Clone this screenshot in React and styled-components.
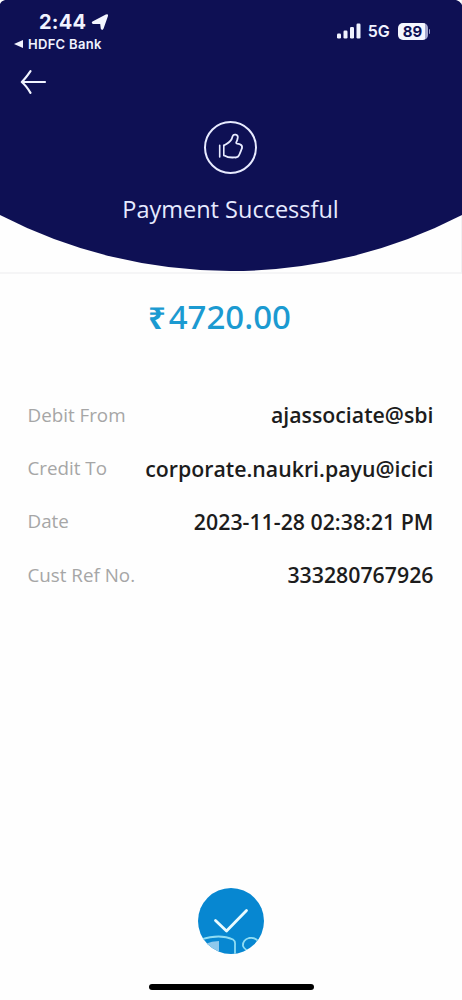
import React from "react";
import styled, { createGlobalStyle } from "styled-components";

const Global = createGlobalStyle`
  * { box-sizing: border-box; }
  html { background: #000; }
  body { margin: 0; font-family: "Open Sans", "Noto Sans", sans-serif; }
`;

const Screen = styled.main`
  width: 462px;
  height: 1000px;
  display: flex;
  flex-direction: column;
  align-items: center;
  overflow: hidden;
  background: #fefefe;
`;

const Header = styled.header`
  position: relative;
  width: 462px;
  height: 274px;
  display: flex;
  flex-direction: column;
  border-bottom: 2px solid #f5f5f6;
  border-right: 1px solid #f1f1f3;
  color: #f0f3ff;
`;

const Dome = styled.svg`
  position: absolute;
  left: 0;
  top: 0;
`;

const StatusBar = styled.div`
  position: relative;
  display: flex;
  justify-content: space-between;
  height: 68px;
  font-family: Inter, sans-serif;
`;

const StatusLeft = styled.div`
  padding: 9px 0 0 14px;
`;

const Clock = styled.div`
  display: flex;
  align-items: center;
  gap: 5px;
  height: 25px;
  padding-left: 25px;
  font-size: 20px;
  font-weight: 700;
  letter-spacing: 0.2px;
`;

const BackApp = styled.div`
  display: flex;
  align-items: center;
  gap: 5px;
  height: 20px;
  font-size: 13px;
  font-weight: 600;
  letter-spacing: 0.3px;
`;

const StatusRight = styled.div`
  display: flex;
  align-items: center;
  height: 20px;
  margin: 21px 31px 0 0;
  font-size: 16px;
  font-weight: 600;
`;

const Network = styled.span`
  margin: 0 8px 0 7px;
  letter-spacing: -0.2px;
`;

const Battery = styled.span`
  display: flex;
  align-items: center;
  justify-content: center;
  width: 30px;
  height: 17px;
  border-radius: 5px;
  background: linear-gradient(90deg, #f4f6ff 89%, #a5a7cc 89%);
  color: #0e1054;
  font-size: 15px;
  font-weight: 700;
`;

const BatteryCap = styled.span`
  width: 1.5px;
  height: 5px;
  margin-left: 1px;
  border-radius: 0 2px 2px 0;
  background: #9a9cc4;
`;

const BackArrow = styled.svg`
  position: relative;
  margin-left: 20px;
`;

const Result = styled.div`
  position: relative;
  display: flex;
  flex-direction: column;
  align-items: center;
  margin-top: 23px;
`;

const Title = styled.h1`
  margin: 16px 0 0;
  height: 36px;
  line-height: 36px;
  font-size: 23.5px;
  font-weight: 400;
  white-space: nowrap;
  color: #e6eaff;
`;

const Amount = styled.div`
  display: flex;
  align-items: center;
  align-self: flex-start;
  gap: 3px;
  height: 44px;
  margin: 21px 0 0 148px;
  line-height: 44px;
  font-family: "Noto Sans", sans-serif;
  font-size: 33px;
  font-weight: 500;
  color: #1b9ad1;
`;

const Rupee = styled.span`
  font-size: 31px;
  font-weight: 700;
`;

const Details = styled.dl`
  width: 405px;
  margin: 49px 0 0;
`;

const Row = styled.div`
  display: flex;
  justify-content: space-between;
  align-items: center;
  height: 53.4px;
`;

const Label = styled.dt`
  margin-left: -1px;
  font-size: 18.8px;
  font-weight: 400;
  color: #a6a6a6;
`;

const Value = styled.dd`
  margin: 0;
  font-size: 21.3px;
  font-weight: 600;
  color: #1c1c1c;
  white-space: nowrap;
`;

const Done = styled.button`
  width: 66px;
  height: 66px;
  margin-top: auto;
  padding: 0;
  border: 0;
  border-radius: 50%;
  overflow: hidden;
  background: #0787d1;
`;

const HomeBar = styled.div`
  width: 165px;
  height: 6px;
  margin: 30px 0 10px;
  border-radius: 3px;
  background: #000;
`;

const rows = [
  ["Debit From", "ajassociate@sbi"],
  ["Credit To", "corporate.naukri.payu@icici"],
  ["Date", "2023-11-28 02:38:21 PM"],
  ["Cust Ref No.", "333280767926"],
];

export default function App() {
  return (
    <>
      <Global />
      <Screen>
        <Header>
          <Dome width="462" height="272" viewBox="0 0 462 272">
            <path d="M0 4Q1 1 5 0H456Q460 1 462 5V215A504 504 0 0 1 0 215Z" fill="#0e1054" />
          </Dome>
          <StatusBar>
            <StatusLeft>
              <Clock>
                2:44
                <svg width="18" height="18" viewBox="0 0 18 18">
                  <path d="M1.5 8.6L14.8 1.5Q17.6 .4 16.9 3.3L12.6 15.6Q11.2 18.2 9.8 15.8L9.2 10.9L2.2 10.9Q-.2 10 1.5 8.6Z" fill="#f4f6ff" />
                </svg>
              </Clock>
              <BackApp>
                <svg width="9" height="8" viewBox="0 0 9 8">
                  <path d="M0 4L9 0V8Z" fill="#f0f3ff" />
                </svg>
                HDFC Bank
              </BackApp>
            </StatusLeft>
            <StatusRight>
              <svg width="24" height="16" viewBox="0 0 24 16" fill="#f0f3ff">
                <rect x="0" y="10.5" width="4" height="5" rx="1.2" />
                <rect x="6.5" y="7.5" width="4" height="8" rx="1.2" />
                <rect x="13" y="4" width="4" height="11.5" rx="1.2" />
                <rect x="19.5" y="0.5" width="4" height="15" rx="1.2" />
              </svg>
              <Network>5G</Network>
              <Battery>89</Battery>
              <BatteryCap />
            </StatusRight>
          </StatusBar>
          <BackArrow width="28" height="30" viewBox="0 0 28 30" fill="none" stroke="#f0f3ff" strokeWidth="2.2" strokeLinecap="round" strokeLinejoin="round">
            <path d="M25 14H2M10.5 3.2Q5.5 10.5 1.8 14Q6 17.5 10.5 24.8" />
          </BackArrow>
          <Result>
            <svg width="54" height="54" viewBox="0 0 54 54" fill="none" stroke="#e8ebff" strokeLinejoin="round" strokeLinecap="round">
              <circle cx="26.5" cy="26.5" r="25.5" strokeWidth="2" />
              <path d="M15.7 24.2V36M19.8 24.2V34.6" strokeWidth="1.6" />
              <path d="M19.8 24.5Q25.6 21.6 27.6 18.2L28.6 15.3C29.5 12.6 34 13.2 33.8 16.4Q33.6 18.6 32.2 21.7C32 23 34.5 22.8 36 23.3Q38.6 24.2 38 27.2C37 29.6 36.5 31 35.4 33.5Q34.2 36.6 31.5 36.5C28 36.3 24.5 37.2 20.8 34.8" strokeWidth="1.8" />
            </svg>
            <Title>Payment Successful</Title>
          </Result>
        </Header>
        <Amount>
          <Rupee>₹</Rupee>
          <span>4720.00</span>
        </Amount>
        <Details>
          {rows.map(([label, value]) => (
            <Row key={label}>
              <Label>{label}</Label>
              <Value>{value}</Value>
            </Row>
          ))}
        </Details>
        <Done aria-label="Done">
          <svg width="66" height="66" viewBox="0 0 66 66" fill="none">
            <path d="M17.5 32.5L28.5 43L48.5 22.5" stroke="#e9fbff" strokeWidth="2.8" strokeLinecap="round" strokeLinejoin="round" />
            <g stroke="#8fdcf3" strokeWidth="1.8">
              <path d="M3 51.5Q22 45.5 35 51.5Q37.5 53 37 57V68" />
              <path d="M60 53Q57 49 51 50Q44.5 52 45 58Q47 63 53 62.5" />
            </g>
            <path d="M7 56Q14 53 21 53V66Q12 64 7 56Z" fill="#8fc9ec" />
          </svg>
        </Done>
        <HomeBar />
      </Screen>
    </>
  );
}
